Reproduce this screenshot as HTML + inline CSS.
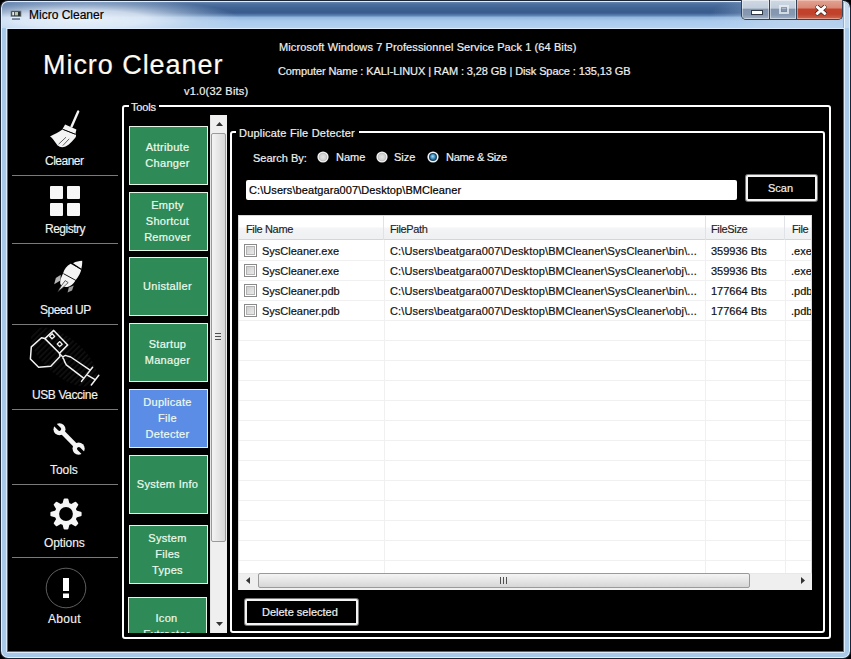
<!DOCTYPE html>
<html><head><meta charset="utf-8">
<style>
*{margin:0;padding:0;box-sizing:border-box}
html,body{width:851px;height:659px;overflow:hidden;background:#000}
body{position:relative;font-family:"Liberation Sans",sans-serif;font-size:11px}
.a{position:absolute}
.t{position:absolute;white-space:pre;line-height:13px;-webkit-text-stroke:0.2px currentColor}
#w0{left:0;top:0;width:851px;height:659px;border-radius:8px;background:#1b2533}
#w1{left:1px;top:1px;width:849px;height:657px;border-radius:7px;background:#e4eefa}
#wt{left:2px;top:2px;width:847px;height:26px;border-radius:6px 6px 0 0;background:linear-gradient(to bottom,#6787b3 0,#4d6f9e 2px,#3d6091 7px,#395c8e 11px,#5c82b2 13.5px,#94b8df 15.5px,#a9c9ec 19px,#b3d1f0 26px)}
#wb{left:2px;top:28px;width:847px;height:629px;border-radius:0 0 6px 6px;background:#a9c9e8}
#wl{left:6px;top:28px;width:839px;height:625px;border-radius:0 0 2px 2px;background:#dcecfc}
#wg{left:7px;top:29px;width:837px;height:623px;background:#5a6470}
#glow{left:2px;top:2px;width:300px;height:26px;background:radial-gradient(ellipse 160px 21px at 78px 17px,rgba(236,243,251,.96) 0,rgba(226,236,248,.86) 42%,rgba(205,222,240,.4) 74%,rgba(200,220,240,0) 100%)}
#glowR{left:690px;top:2px;width:159px;height:26px;background:radial-gradient(ellipse 90px 22px at 110px 13px,rgba(200,218,238,.7) 0,rgba(200,218,238,0) 100%)}
#client{left:8px;top:29px;width:835px;height:622px;background:#000}
.sep{position:absolute;left:12px;width:106px;height:1px;background:#7a7a7a}
.nav{position:absolute;color:#f2f2f2;font-size:12px;white-space:pre;line-height:13px;-webkit-text-stroke:0.15px currentColor}
.gb{position:absolute;border:2px solid #fff;border-radius:3px}
.btn{-webkit-text-stroke:0.2px currentColor;position:absolute;left:129px;width:79px;height:59px;background:#2e8b57;border:1px solid #e6f5e6;color:#eefaee;text-align:center;font-size:11px;line-height:16px;letter-spacing:0.3px;padding-bottom:1px;padding-right:2px;display:flex;align-items:center;justify-content:center;white-space:pre}
.hdr{position:absolute;top:223px;letter-spacing:-0.35px;color:#1e1e1e;white-space:pre;line-height:13px;-webkit-text-stroke:0.15px currentColor}
.cell{position:absolute;color:#111;white-space:pre;line-height:13px;-webkit-text-stroke:0.2px currentColor}
.cb{position:absolute;left:244px;width:13px;height:13px;border:1px solid #8a8a8a;padding:1px;background:linear-gradient(135deg,#cbcbcb,#eeeeee) content-box,#fff;box-shadow:inset 0 0 0 1px #fff,inset 0 0 0 2px #b4b4b4}
</style></head><body>
<div id="w0" class="a"></div>
<div id="w1" class="a"></div>
<div id="wb" class="a"></div>
<div id="wt" class="a"></div>
<div id="glow" class="a"></div>
<div id="glowR" class="a"></div>
<div class="a" style="left:843px;top:2px;width:6px;height:26px;border-top-right-radius:6px;background:linear-gradient(to right,#9aaec4 0,#9aaec4 1px,#e6f2fe 1px,#e6f2fe 2px,#c4d8ee 2px)"></div>
<div id="wl" class="a"></div>
<div id="wg" class="a"></div>

<!-- title icon -->
<svg class="a" style="left:10px;top:10px" width="12" height="11" viewBox="0 0 12 11">
 <rect x="1" y="1" width="10" height="5.5" fill="#2c3230" stroke="#7d8a92" stroke-width="0.8"/>
 <rect x="2.2" y="2" width="2" height="3.4" fill="#e6ecee"/><rect x="5" y="2" width="3" height="3.4" fill="#b8c8b0"/>
 <rect x="1" y="7" width="10" height="0.8" fill="#e8f0ff"/>
 <rect x="2" y="8.3" width="8" height="1.5" fill="#5a6b8a"/>
</svg>
<div class="t" style="left:29px;top:9px;font-size:12px;color:#000;letter-spacing:0">Micro Cleaner</div>

<!-- title buttons -->
<div class="a" style="left:741px;top:0;width:102px;height:20px;border:1px solid #354354;border-top:none;border-radius:0 0 5px 5px;overflow:hidden;background:#354354">
  <div class="a" style="left:0;top:0;width:27px;height:19px;background:linear-gradient(#d0d9e5 0,#c2cedc 42%,#8295af 50%,#8799b2 78%,#a3b4c9 100%);box-shadow:inset 0 0 0 1px rgba(255,255,255,.45)"></div>
  <div class="a" style="left:28px;top:0;width:26px;height:19px;background:linear-gradient(#d0d9e5 0,#c2cedc 42%,#8295af 50%,#8799b2 78%,#a3b4c9 100%);box-shadow:inset 0 0 0 1px rgba(255,255,255,.45)"></div>
  <div class="a" style="left:55px;top:0;width:46px;height:19px;background:linear-gradient(#e2a494 0,#d98a76 40%,#c4412a 50%,#bf422c 75%,#d06a52 100%);box-shadow:inset 0 0 0 1px rgba(255,220,210,.45)"></div>
  <div class="a" style="left:9px;top:10px;width:12px;height:5px;background:#fff;border:1px solid #2e3846"></div>
  <div class="a" style="left:37px;top:5px;width:10px;height:9px;border:2px solid rgba(236,240,246,.75);box-shadow:inset 0 0 0 1px rgba(110,125,145,.6)"></div>
  <svg class="a" style="left:73px;top:5px" width="12" height="11" viewBox="0 0 12 11"><path d="M1 0.8 L11 9.6 M11 0.8 L1 9.6" stroke="#3a1e18" stroke-width="4.4"/><path d="M1.3 1.1 L10.7 9.3 M10.7 1.1 L1.3 9.3" stroke="#fff" stroke-width="2.9"/></svg>
</div>

<div id="client" class="a"></div>

<!-- header texts -->
<div class="t" style="left:43px;top:50px;font-size:27px;line-height:30px;color:#fffaf0;letter-spacing:0.95px">Micro Cleaner</div>
<div class="t" style="left:184px;top:85px;color:#f0f0f0;letter-spacing:0.2px">v1.0(32 Bits)</div>
<div class="t" style="left:279px;top:41px;color:#f0f0f0;letter-spacing:0.1px">Microsoft Windows 7 Professionnel Service Pack 1 (64 Bits)</div>
<div class="t" style="left:278px;top:65px;color:#f0f0f0;letter-spacing:-0.1px">Computer Name : KALI-LINUX | RAM : 3,28 GB | Disk Space : 135,13 GB</div>

<!-- left nav -->
<div class="sep" style="top:175px"></div>
<div class="sep" style="top:243px"></div>
<div class="sep" style="top:324px"></div>
<div class="sep" style="top:409px"></div>
<div class="sep" style="top:484px"></div>
<div class="sep" style="top:557px"></div>

<div class="nav" style="left:45px;top:155px;letter-spacing:-0.5px">Cleaner</div>
<div class="nav" style="left:45px;top:223px;letter-spacing:-0.5px">Registry</div>
<div class="nav" style="left:40px;top:304px;letter-spacing:-0.5px">Speed UP</div>
<div class="nav" style="left:32px;top:389px;letter-spacing:-0.4px">USB Vaccine</div>
<div class="nav" style="left:50px;top:464px;letter-spacing:-0.05px">Tools</div>
<div class="nav" style="left:44px;top:537px;letter-spacing:-0.1px">Options</div>
<div class="nav" style="left:48px;top:613px;letter-spacing:0.3px">About</div>

<!-- icons -->
<svg class="a" style="left:0;top:0" width="120" height="659" viewBox="0 0 120 659">
 <!-- broom -->
 <path d="M78.2 111.6 L71.6 126.4" stroke="#f4f4f4" stroke-width="2.4" stroke-linecap="round"/>
 <path d="M65.1 124.6 L76.4 129.6 L75.4 134 L62.6 129 Z" fill="#f4f4f4"/>
 <path d="M62.4 129.6 L76 134.8 C76.2 136.4 75.6 137.6 74.6 138.6 C72.6 141 70.8 143 68.8 144.6 C66.8 146.2 64.4 147.2 62.2 147.2 C60.4 147 58.8 146.2 57.6 145.4 C55.6 143 54 140.4 52.4 138.6 C51.6 137.6 50.8 136.8 50 136.4 C54.4 134.6 58.6 132.4 62.4 129.6 Z" fill="#f4f4f4"/>
 <path d="M63 129.4 L75.2 134.2" stroke="#000" stroke-width="0.9"/>
 <path d="M69.2 138.8 L62.8 145.6 M66 137.2 L58.6 144.2" stroke="#000" stroke-width="0.8" opacity="0.75"/>
 <!-- registry -->
 <rect x="50" y="186" width="13" height="13" rx="1" fill="#f6f6f6"/>
 <rect x="67" y="186" width="13" height="13" rx="1" fill="#f6f6f6"/>
 <rect x="50" y="203" width="13" height="13" rx="1" fill="#f6f6f6"/>
 <rect x="67" y="203" width="13" height="13" rx="1" fill="#f6f6f6"/>
 <!-- rocket -->
 <path d="M54.2 284.2 L55.8 278 L60.8 274.8 L60.4 280.6 Z" fill="#b4b4b4"/>
 <path d="M67.6 292.6 L68.8 287.6 L73.8 285.6 L72 290.6 Z" fill="#9c9c9c"/>
 <path d="M73 263.2 C76 261.6 79 260.9 82.2 260.8 C82.4 263.6 81.9 266 81.4 268.8 Z" fill="#f4f4f4"/>
 <path d="M70.6 263.8 C66.8 266 64.2 269.4 63.2 273 C61.6 276.6 59.8 280.2 60.2 283.6 C60.8 286.2 64 287.4 67.2 287 C70.6 286.4 73.6 283.6 75.6 280.2 C78.6 276.6 80.6 273 81.3 269.6 Z" fill="#f4f4f4"/>
 <path d="M73.2 264.4 L81.2 269.6 M63.4 273.6 L76.2 280.6" stroke="#000" stroke-width="0.9"/>
 <path d="M65.2 280.6 C62.4 284 59.8 287.8 57.8 291.8 C61.2 289.2 64.8 286 68.2 282.6 Z" fill="#ececec" stroke="#222" stroke-width="0.7"/>
 <!-- usb vaccine -->
 <defs>
  <pattern id="hatch" patternUnits="userSpaceOnUse" width="4" height="4" patternTransform="rotate(45)">
   <rect x="0" y="0" width="1.6" height="4" fill="#262626"/>
  </pattern>
  <clipPath id="hclip"><ellipse cx="64" cy="357" rx="40" ry="19" transform="rotate(40 64 357)"/></clipPath>
 </defs>
 <rect x="20" y="320" width="90" height="70" fill="url(#hatch)" clip-path="url(#hclip)" opacity="0.45"/>
 <g fill="none" stroke="#f2f2f2" stroke-width="1.5" stroke-linejoin="round" stroke-linecap="round">
  <path d="M44.9 338.6 L53.7 330.4 L67.7 344.9 L59.5 353.2 Z"/>
  <path d="M44.9 338.6 L41.5 337.7 L31.3 346.9 L30.4 359 L38.6 367.3 L50.8 366.3 L60 356.6 L59.5 353.2"/>
  <path d="M49.6 336.2 L52.2 333.8 L54.6 336.4 L52 338.8 Z M57.2 344 L59.8 341.6 L62.2 344.2 L59.6 346.6 Z" stroke-width="1.3"/>
  <path d="M59.5 353.7 L62.9 357 C64 356 65 355.4 66 355.6 L70.7 357 L89.7 369.8"/>
  <path d="M62.9 358 C63.8 359 64.3 360.5 64.6 361.6 L66.3 364.8 L83.3 377.8"/>
  <path d="M92.6 367.3 L81.5 381.4"/>
  <path d="M87.8 375.3 L94.7 379.4"/>
  <path d="M98.8 375.3 L91.3 385"/>
 </g>
 <!-- wrench -->
 <path d="M59.5 429.2 L78.6 448.6" stroke="#f4f4f4" stroke-width="4.6"/>
 <circle cx="59.5" cy="429.2" r="6" fill="#f4f4f4"/>
 <circle cx="78.6" cy="448.6" r="6.1" fill="#f4f4f4"/>
 <path d="M59.4 429 L52.6 422.2" stroke="#000" stroke-width="3.6" stroke-linecap="round"/>
 <path d="M78.8 448.8 L85.6 455.6" stroke="#000" stroke-width="3.6" stroke-linecap="round"/>
 <!-- gear -->
 <g fill="#f6f6f6" stroke="#f6f6f6" stroke-width="2.2" stroke-linejoin="round" transform="translate(66 514)">
  <circle r="11.2" stroke="none"/>
  <path d="M-2.7 -9 L-1.3 -14.5 L1.3 -14.5 L2.7 -9 Z" transform="rotate(0)"/><path d="M-2.7 -9 L-1.3 -14.5 L1.3 -14.5 L2.7 -9 Z" transform="rotate(45)"/><path d="M-2.7 -9 L-1.3 -14.5 L1.3 -14.5 L2.7 -9 Z" transform="rotate(90)"/><path d="M-2.7 -9 L-1.3 -14.5 L1.3 -14.5 L2.7 -9 Z" transform="rotate(135)"/><path d="M-2.7 -9 L-1.3 -14.5 L1.3 -14.5 L2.7 -9 Z" transform="rotate(180)"/><path d="M-2.7 -9 L-1.3 -14.5 L1.3 -14.5 L2.7 -9 Z" transform="rotate(225)"/><path d="M-2.7 -9 L-1.3 -14.5 L1.3 -14.5 L2.7 -9 Z" transform="rotate(270)"/><path d="M-2.7 -9 L-1.3 -14.5 L1.3 -14.5 L2.7 -9 Z" transform="rotate(315)"/>
  <circle r="6.9" fill="#000" stroke="none"/>
 </g>
 <!-- about -->
 <circle cx="66" cy="588" r="19.8" fill="none" stroke="#5e5e5e" stroke-width="1"/>
 <rect x="63" y="578" width="6" height="13" fill="#fff"/>
 <rect x="63" y="593.5" width="6" height="4.5" fill="#fff"/>
</svg>

<!-- Tools groupbox -->
<div class="gb" style="left:122px;top:105px;width:709px;height:534px"></div>
<div class="t" style="left:129px;top:101px;background:#000;padding:0 3px 0 2px;color:#f0f0f0;letter-spacing:-0.2px">Tools</div>

<!-- tool buttons viewport -->
<div class="a" style="left:124px;top:115px;width:86px;height:518px;overflow:hidden">
 <div class="btn" style="left:5px;top:11px">Attribute
Changer</div>
 <div class="btn" style="left:5px;top:77px">Empty
Shortcut
Remover</div>
 <div class="btn" style="left:5px;top:142px">Unistaller</div>
 <div class="btn" style="left:5px;top:208px">Startup
Manager</div>
 <div class="btn" style="left:5px;top:274px;background:#5b8de6;border-color:#e8eefa">Duplicate
File
Detecter</div>
 <div class="btn" style="left:5px;top:340px">System Info</div>
 <div class="btn" style="left:5px;top:410px">System
Files
Types</div>
 <div class="btn" style="left:4px;top:482px;align-items:flex-start;padding-top:12px">Icon
Extractor</div>
</div>

<!-- vertical scrollbar -->
<div class="a" style="left:210px;top:115px;width:17px;height:518px;background:#efefef;border-left:1px solid #e4e4e4"></div>
<svg class="a" style="left:210px;top:115px" width="17" height="17"><path d="M6 11 L9.5 7 L13 11 Z" fill="#333"/></svg>
<div class="a" style="left:211px;top:133px;width:15px;height:409px;border:1px solid #9a9a9a;border-radius:2px;background:linear-gradient(to right,#f4f4f4,#e6e6e6 50%,#d8d8d8)"></div>
<div class="a" style="left:215px;top:333px;width:6px;height:1px;background:#505050;box-shadow:0 3px 0 #505050,0 6px 0 #505050"></div>
<svg class="a" style="left:210px;top:616px" width="17" height="17"><path d="M6 6 L9.5 10 L13 6 Z" fill="#333"/></svg>

<!-- Duplicate groupbox -->
<div class="gb" style="left:230px;top:131px;width:595px;height:502px"></div>
<div class="t" style="left:236px;top:127px;background:#000;padding:0 4px 0 3px;color:#f0f0f0;letter-spacing:0.2px">Duplicate File Detecter</div>

<div class="t" style="left:253px;top:152px;color:#f0f0f0">Search By:</div>
<svg class="a" style="left:317px;top:151px" width="12" height="12"><defs><radialGradient id="rg" cx="50%" cy="50%" r="50%"><stop offset="0" stop-color="#e6e6e6"/><stop offset="0.7" stop-color="#d2d2d2"/><stop offset="1" stop-color="#b4b4b4"/></radialGradient></defs><circle cx="6" cy="6" r="5.6" fill="#f4f4f4"/><circle cx="6" cy="6" r="4.3" fill="url(#rg)"/></svg>
<div class="t" style="left:336px;top:151px;color:#f0f0f0">Name</div>
<svg class="a" style="left:376px;top:151px" width="12" height="12"><circle cx="6" cy="6" r="5.6" fill="#f4f4f4"/><circle cx="6" cy="6" r="4.3" fill="url(#rg)"/></svg>
<div class="t" style="left:394px;top:151px;color:#f0f0f0">Size</div>
<svg class="a" style="left:427px;top:151px" width="12" height="12"><defs><radialGradient id="rb" cx="45%" cy="40%" r="55%"><stop offset="0" stop-color="#a8dcf6"/><stop offset="0.6" stop-color="#4a9ccc"/><stop offset="1" stop-color="#2a6a98"/></radialGradient></defs><circle cx="6" cy="6" r="5.6" fill="#f0f4f8"/><circle cx="6" cy="6" r="4" fill="#173e5c"/><circle cx="6" cy="6" r="2.9" fill="url(#rb)"/></svg>
<div class="t" style="left:446px;top:151px;color:#f0f0f0;letter-spacing:-0.3px">Name &amp; Size</div>

<!-- path textbox -->
<div class="a" style="left:246px;top:180px;width:491px;height:20px;background:#fff;border-radius:2px"></div>
<div class="t" style="left:249px;top:184px;color:#000;letter-spacing:0.08px">C:\Users\beatgara007\Desktop\BMCleaner</div>

<!-- scan button -->
<div class="a" style="left:746px;top:175px;width:71px;height:26px;border:2px solid #f4f4f4;border-radius:2px;background:#000;box-shadow:0 0 0 1px rgba(235,235,235,.5)"></div>
<div class="t" style="left:768px;top:182px;color:#f0f0f0">Scan</div>

<!-- listview -->
<div class="a" style="left:238px;top:215px;width:574px;height:375px;background:#fff;border:1px solid #d8d8d8;overflow:hidden">
 <div class="a" style="left:0;top:0;width:574px;height:24px;background:linear-gradient(#ffffff 0,#ffffff 45%,#f3f4f6 55%,#eef0f2 100%);border-bottom:1px solid #d5d5d5"></div>
 <div class="a" style="left:144px;top:0;width:1px;height:24px;background:#dfe2e6"></div>
 <div class="a" style="left:466px;top:0;width:1px;height:24px;background:#dfe2e6"></div>
 <div class="a" style="left:545px;top:0;width:1px;height:24px;background:#dfe2e6"></div>
</div>
<!-- grid -->
<div class="a" style="left:239px;top:260px;width:572px;height:1px;background:#f0f0f0"></div>
<div class="a" style="left:239px;top:280px;width:572px;height:1px;background:#f0f0f0"></div>
<div class="a" style="left:239px;top:300px;width:572px;height:1px;background:#f0f0f0"></div>
<div class="a" style="left:239px;top:320px;width:572px;height:1px;background:#f0f0f0"></div>
<div class="a" style="left:239px;top:340px;width:572px;height:1px;background:#f0f0f0"></div>
<div class="a" style="left:239px;top:360px;width:572px;height:1px;background:#f0f0f0"></div>
<div class="a" style="left:239px;top:380px;width:572px;height:1px;background:#f0f0f0"></div>
<div class="a" style="left:239px;top:400px;width:572px;height:1px;background:#f0f0f0"></div>
<div class="a" style="left:239px;top:420px;width:572px;height:1px;background:#f0f0f0"></div>
<div class="a" style="left:239px;top:440px;width:572px;height:1px;background:#f0f0f0"></div>
<div class="a" style="left:239px;top:460px;width:572px;height:1px;background:#f0f0f0"></div>
<div class="a" style="left:239px;top:480px;width:572px;height:1px;background:#f0f0f0"></div>
<div class="a" style="left:239px;top:500px;width:572px;height:1px;background:#f0f0f0"></div>
<div class="a" style="left:239px;top:520px;width:572px;height:1px;background:#f0f0f0"></div>
<div class="a" style="left:239px;top:540px;width:572px;height:1px;background:#f0f0f0"></div>
<div class="a" style="left:239px;top:560px;width:572px;height:1px;background:#f0f0f0"></div>
<div class="a" style="left:384px;top:240px;width:1px;height:333px;background:#f0f0f0"></div>
<div class="a" style="left:705px;top:240px;width:1px;height:333px;background:#f0f0f0"></div>
<div class="a" style="left:785px;top:240px;width:1px;height:333px;background:#f0f0f0"></div>
<div class="hdr" style="left:246px">File Name</div>
<div class="hdr" style="left:390px">FilePath</div>
<div class="hdr" style="left:711px">FileSize</div>
<div class="hdr" style="left:792px">File</div>
<div class="a" style="left:239px;top:215px;width:573px;height:375px;overflow:hidden">
</div>
<div class="cb" style="top:244px"></div>
<div class="cell" style="left:262px;top:245px">SysCleaner.exe</div>
<div class="cell" style="left:390px;top:245px;letter-spacing:0.14px">C:\Users\beatgara007\Desktop\BMCleaner\SysCleaner\bin\...</div>
<div class="cell" style="left:711px;top:245px">359936 Bts</div>
<div class="a" style="left:785px;top:241px;width:26px;height:18px;overflow:hidden"><div class="cell" style="left:6px;top:4px">.exe</div></div>
<div class="cb" style="top:264px"></div>
<div class="cell" style="left:262px;top:265px">SysCleaner.exe</div>
<div class="cell" style="left:390px;top:265px;letter-spacing:0.14px">C:\Users\beatgara007\Desktop\BMCleaner\SysCleaner\obj\...</div>
<div class="cell" style="left:711px;top:265px">359936 Bts</div>
<div class="a" style="left:785px;top:261px;width:26px;height:18px;overflow:hidden"><div class="cell" style="left:6px;top:4px">.exe</div></div>
<div class="cb" style="top:284px"></div>
<div class="cell" style="left:262px;top:285px">SysCleaner.pdb</div>
<div class="cell" style="left:390px;top:285px;letter-spacing:0.14px">C:\Users\beatgara007\Desktop\BMCleaner\SysCleaner\bin\...</div>
<div class="cell" style="left:711px;top:285px">177664 Bts</div>
<div class="a" style="left:785px;top:281px;width:26px;height:18px;overflow:hidden"><div class="cell" style="left:6px;top:4px">.pdb</div></div>
<div class="cb" style="top:304px"></div>
<div class="cell" style="left:262px;top:305px">SysCleaner.pdb</div>
<div class="cell" style="left:390px;top:305px;letter-spacing:0.14px">C:\Users\beatgara007\Desktop\BMCleaner\SysCleaner\obj\...</div>
<div class="cell" style="left:711px;top:305px">177664 Bts</div>
<div class="a" style="left:785px;top:301px;width:26px;height:18px;overflow:hidden"><div class="cell" style="left:6px;top:4px">.pdb</div></div>
<div class="a" style="left:239px;top:573px;width:573px;height:17px;background:#efefef;border-top:1px solid #e8e8e8"></div>
<svg class="a" style="left:239px;top:573px" width="18" height="17"><path d="M11 4 L7 7.5 L11 11 Z" fill="#333"/></svg>
<svg class="a" style="left:795px;top:573px" width="17" height="17"><path d="M6 4 L10 7.5 L6 11 Z" fill="#333"/></svg>
<div class="a" style="left:258px;top:573px;width:492px;height:15px;border:1px solid #9a9a9a;border-radius:2px;background:linear-gradient(#f4f4f4,#e6e6e6 50%,#d6d6d6)"></div>
<div class="a" style="left:500px;top:577px;width:1px;height:7px;background:#505050;box-shadow:3px 0 0 #505050,6px 0 0 #505050"></div>
<div class="a" style="left:245px;top:599px;width:113px;height:26px;border:2px solid #f4f4f4;border-radius:2px;background:#000;box-shadow:0 0 0 1px rgba(235,235,235,.5)"></div>
<div class="t" style="left:262px;top:606px;color:#f0f0f0">Delete selected</div>
</body></html>
